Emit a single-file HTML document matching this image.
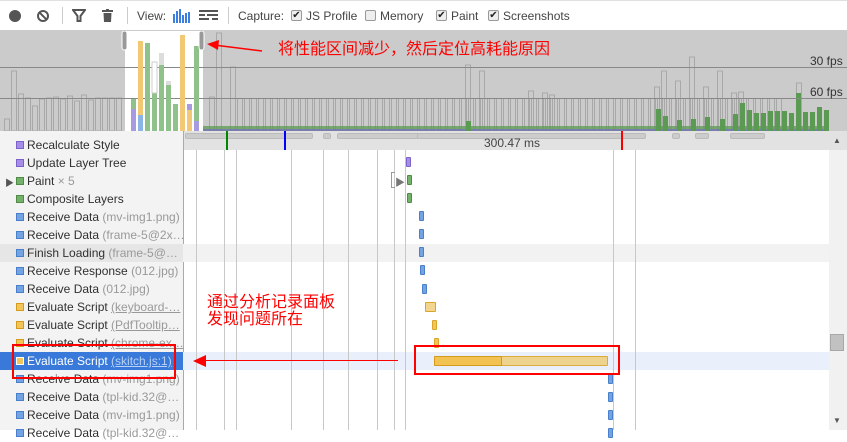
<!DOCTYPE html>
<html><head><meta charset="utf-8"><style>
*{margin:0;padding:0;box-sizing:border-box}
body{width:847px;height:430px;overflow:hidden;background:#fff;font-family:"Liberation Sans","Noto Sans CJK SC",sans-serif;position:relative;font-size:12px;color:#222}
.a{position:absolute}
.tb{left:0;top:0;width:847px;height:31px;background:#fff;border-bottom:1px solid #ccc;border-top:1px solid #e0e0e0}
.tt{font-size:12px;color:#444;top:9px}
.cb{width:11px;height:11px;border:1px solid #999;border-radius:2px;background:#eee;top:10px;font-size:10px;line-height:9px;text-align:center;color:#222}
.row{left:0;width:829px;height:18px}
.lab{position:absolute;left:27px;top:2px;font-size:12px;color:#303030;white-space:nowrap}
.lab i{font-style:normal;color:#999}
.sq{position:absolute;left:16px;top:5px;width:8px;height:8px;border:1px solid}
.gl{top:150px;width:1px;height:280px;background:#c8c8c8}
.b{position:absolute;border:1px solid;border-radius:1px}
</style></head><body>
<div class="a tb"></div>
<div class="a" style="left:9px;top:10px;width:12px;height:12px;border-radius:6px;background:#555"></div>
<div class="a" style="left:37px;top:10px;width:12px;height:12px;border-radius:6px;border:2px solid #555"></div>
<div class="a" style="left:38px;top:15px;width:10px;height:2px;background:#555;transform:rotate(45deg)"></div>
<div class="a" style="left:62px;top:7px;width:1px;height:17px;background:#ccc"></div>
<svg class="a" style="left:72px;top:9px" width="14" height="14"><path d="M1 1H13L8.5 7V12H5.5V7Z" fill="none" stroke="#555" stroke-width="2"/></svg>
<svg class="a" style="left:102px;top:9px" width="12" height="14"><rect x="0" y="1" width="11" height="2" fill="#555"/><rect x="4" y="0" width="3" height="2" fill="#555"/><path d="M1.5 4H9.5L9 13H2Z" fill="#555"/></svg>
<div class="a" style="left:127px;top:7px;width:1px;height:17px;background:#ccc"></div>
<div class="a tt" style="left:137px">View:</div>
<svg class="a" style="left:173px;top:9px" width="17" height="14"><g fill="#3b7de0"><rect x="0" y="5" width="2" height="9"/><rect x="3" y="2" width="2" height="12"/><rect x="6" y="0" width="2" height="14"/><rect x="9" y="6" width="2" height="8"/><rect x="12" y="4" width="2" height="10"/><rect x="15" y="3" width="2" height="11"/></g></svg>
<svg class="a" style="left:199px;top:10px" width="19" height="11"><g fill="#555"><rect x="0" y="0" width="19" height="2"/><rect x="0" y="4" width="6" height="2"/><rect x="8" y="4" width="11" height="2"/><rect x="0" y="8" width="10" height="2"/><rect x="13" y="8" width="6" height="2"/></g></svg>
<div class="a" style="left:228px;top:7px;width:1px;height:17px;background:#ccc"></div>
<div class="a tt" style="left:238px">Capture:</div>
<div class="a cb" style="left:291px">✔</div><div class="a tt" style="left:306px">JS Profile</div>
<div class="a cb" style="left:365px"></div><div class="a tt" style="left:380px">Memory</div>
<div class="a cb" style="left:436px">✔</div><div class="a tt" style="left:451px">Paint</div>
<div class="a cb" style="left:488px">✔</div><div class="a tt" style="left:503px">Screenshots</div>

<svg class="a" style="left:0;top:31px" width="847" height="100">
<rect width="847" height="100" fill="#cbcbcb"/>
<rect x="125" y="0" width="78" height="100" fill="#fff"/>
<g fill="none" stroke="#a8a8a8">
<rect x="4.5" y="88" width="5" height="12"/><rect x="11.5" y="40" width="5" height="60"/><rect x="18.5" y="63" width="5" height="37"/><rect x="25.5" y="67" width="5" height="33"/><rect x="32.5" y="75" width="5" height="25"/><rect x="39.5" y="68" width="5" height="32"/><rect x="46.5" y="67" width="5" height="33"/><rect x="53.5" y="66" width="5" height="34"/><rect x="60.5" y="68" width="5" height="32"/><rect x="67.5" y="65" width="5" height="35"/><rect x="74.5" y="70" width="5" height="30"/><rect x="81.5" y="64" width="5" height="36"/><rect x="88.5" y="69" width="5" height="31"/><rect x="95.5" y="67" width="5" height="33"/><rect x="102.5" y="67" width="5" height="33"/><rect x="109.5" y="67" width="5" height="33"/><rect x="116.5" y="67" width="5" height="33"/>
<rect x="209.5" y="66" width="5" height="34"/><rect x="216.5" y="2" width="5" height="98"/><rect x="230.5" y="36" width="5" height="64"/>
<path d="M237.5 67.5h5v33h-5z m7 0h5v33h-5z m7 0h5v33h-5z m7 0h5v33h-5z m7 0h5v33h-5z m7 0h5v33h-5z m7 0h5v33h-5z m7 0h5v33h-5z m7 0h5v33h-5z m7 0h5v33h-5z m7 0h5v33h-5z m7 0h5v33h-5z m7 0h5v33h-5z m7 0h5v33h-5z m7 0h5v33h-5z m7 0h5v33h-5z m7 0h5v33h-5z m7 0h5v33h-5z m7 0h5v33h-5z m7 0h5v33h-5z m7 0h5v33h-5z m7 0h5v33h-5z m7 0h5v33h-5z m7 0h5v33h-5z m7 0h5v33h-5z m7 0h5v33h-5z m7 0h5v33h-5z m7 0h5v33h-5z m7 0h5v33h-5z m7 0h5v33h-5z m7 0h5v33h-5z m7 0h5v33h-5z m7 0h5v33h-5z m7 0h5v33h-5z m7 0h5v33h-5z m7 0h5v33h-5z m7 0h5v33h-5z m7 0h5v33h-5z m7 0h5v33h-5z m7 0h5v33h-5z m7 0h5v33h-5z m7 0h5v33h-5z m7 0h5v33h-5z m7 0h5v33h-5z m7 0h5v33h-5z m7 0h5v33h-5z m7 0h5v33h-5z m7 0h5v33h-5z m7 0h5v33h-5z m7 0h5v33h-5z m7 0h5v33h-5z m7 0h5v33h-5z m7 0h5v33h-5z m7 0h5v33h-5z m7 0h5v33h-5z m7 0h5v33h-5z m7 0h5v33h-5z m7 0h5v33h-5z m7 0h5v33h-5z m7 0h5v33h-5z m7 0h5v33h-5z m7 0h5v33h-5z m7 0h5v33h-5z m7 0h5v33h-5z m7 0h5v33h-5z m7 0h5v33h-5z m7 0h5v33h-5z m7 0h5v33h-5z m7 0h5v33h-5z m7 0h5v33h-5z m7 0h5v33h-5z m7 0h5v33h-5z m7 0h5v33h-5z m7 0h5v33h-5z m7 0h5v33h-5z m7 0h5v33h-5z m7 0h5v33h-5z m7 0h5v33h-5z"/>
<rect x="465.5" y="34" width="5" height="66"/><rect x="479.5" y="40" width="5" height="60"/><rect x="528.5" y="60" width="5" height="40"/><rect x="542.5" y="62" width="5" height="38"/><rect x="549.5" y="64" width="5" height="36"/><rect x="654.5" y="56" width="5" height="44"/><rect x="661.5" y="40" width="5" height="60"/><rect x="675.5" y="50" width="5" height="50"/><rect x="689.5" y="26" width="5" height="74"/><rect x="703.5" y="56" width="5" height="44"/><rect x="717.5" y="40" width="5" height="60"/><rect x="731.5" y="62" width="5" height="38"/><rect x="738.5" y="61" width="5" height="39"/><rect x="796.5" y="52" width="5" height="48"/>
</g>
<rect x="203" y="95" width="626" height="5" fill="#5b9a52" opacity=".75"/>
<rect x="203" y="98" width="626" height="2" fill="#7b6fc4" opacity=".7"/>
<g fill="#5b9a52">
<rect x="466" y="90" width="5" height="10"/><rect x="656" y="78" width="5" height="22"/><rect x="663" y="85" width="5" height="15"/><rect x="677" y="89" width="5" height="11"/><rect x="691" y="88" width="5" height="12"/><rect x="705" y="86" width="5" height="14"/><rect x="720" y="88" width="5" height="12"/><rect x="733" y="83" width="5" height="17"/><rect x="740" y="72" width="5" height="28"/><rect x="747" y="79" width="5" height="21"/><rect x="754" y="82" width="5" height="18"/><rect x="761" y="82" width="5" height="18"/><rect x="768" y="80" width="5" height="20"/><rect x="775" y="80" width="5" height="20"/><rect x="782" y="80" width="5" height="20"/><rect x="789" y="82" width="5" height="18"/><rect x="796" y="62" width="5" height="38"/><rect x="803" y="81" width="5" height="19"/><rect x="810" y="81" width="5" height="19"/><rect x="817" y="76" width="5" height="24"/><rect x="824" y="79" width="5" height="21"/>
</g>
<line x1="0" y1="36.5" x2="847" y2="36.5" stroke="#888"/>
<line x1="0" y1="67.5" x2="847" y2="67.5" stroke="#888"/>
<text x="810" y="34" font-size="12" fill="#333" font-family="Liberation Sans">30 fps</text>
<text x="810" y="65" font-size="12" fill="#333" font-family="Liberation Sans">60 fps</text>
<g>
<rect x="131" y="68" width="5" height="32" fill="#a89ae0"/><rect x="131" y="68" width="5" height="10" fill="#8fc18a"/>
<rect x="138" y="10" width="5" height="90" fill="#f2c874"/><rect x="138" y="84" width="5" height="16" fill="#8ab4e8"/>
<rect x="145" y="12" width="5" height="88" fill="#8fc18a"/>
<rect x="152" y="62" width="5" height="38" fill="#8fc18a"/><rect x="152" y="31" width="5" height="31" fill="#fff" stroke="#ccc"/>
<rect x="159" y="34" width="5" height="66" fill="#8fc18a"/><rect x="159" y="22" width="5" height="12" fill="#ddd"/>
<rect x="166" y="54" width="5" height="46" fill="#8fc18a"/><rect x="166" y="50" width="5" height="4" fill="#ddd"/>
<rect x="173" y="73" width="5" height="27" fill="#8fc18a"/>
<rect x="180" y="4" width="5" height="96" fill="#f2c874"/>
<rect x="187" y="79" width="5" height="21" fill="#f2c874"/><rect x="187" y="73" width="5" height="6" fill="#a89ae0"/>
<rect x="194" y="15" width="5" height="85" fill="#8fc18a"/><rect x="194" y="90" width="5" height="10" fill="#a89ae0"/>
</g>
<rect x="122" y="0" width="5" height="19" rx="2.5" fill="#999" stroke="#fff"/>
<rect x="199" y="0" width="5" height="19" rx="2.5" fill="#999" stroke="#fff"/>
<line x1="214" y1="14" x2="262" y2="20" stroke="red" stroke-width="1.5"/>
<path d="M207 13L219 9L218 19Z" fill="red"/>
<text x="278" y="23" font-size="16" fill="red" font-family="Noto Sans CJK SC,sans-serif">将性能区间减少，然后定位高耗能原因</text>
</svg>

<div class="a" style="left:0;top:131px;width:183px;height:299px;background:#f3f3f3"></div>
<div class="a" style="left:183px;top:131px;width:646px;height:19px;background:#e2e2e2"></div>
<div class="a" style="left:185px;top:133px;width:128px;height:6px;background:#ccc;border-radius:2px;border:1px solid #bbb"></div>
<div class="a" style="left:323px;top:133px;width:8px;height:6px;background:#ccc;border-radius:2px;border:1px solid #bbb"></div>
<div class="a" style="left:337px;top:133px;width:228px;height:6px;background:#ccc;border-radius:2px;border:1px solid #bbb"></div>
<div class="a" style="left:417px;top:133px;width:229px;height:6px;background:#ccc;border-radius:2px;border:1px solid #bbb"></div>
<div class="a" style="left:672px;top:133px;width:8px;height:6px;background:#ccc;border-radius:2px;border:1px solid #bbb"></div>
<div class="a" style="left:695px;top:133px;width:14px;height:6px;background:#ccc;border-radius:2px;border:1px solid #bbb"></div>
<div class="a" style="left:730px;top:133px;width:35px;height:6px;background:#ccc;border-radius:2px;border:1px solid #bbb"></div>
<div class="a" style="left:484px;top:136px;font-size:12px;color:#444">300.47 ms</div>
<div class="a" style="left:226px;top:131px;width:2px;height:19px;background:#080"></div>
<div class="a" style="left:284px;top:131px;width:2px;height:19px;background:#00f"></div>
<div class="a" style="left:621px;top:131px;width:2px;height:19px;background:#f00"></div>
<div class="a" style="left:183px;top:131px;width:1px;height:299px;background:#aaa"></div>

<div class="a row" style="top:244px;background:#f2f2f2"></div>
<div class="a" style="left:0;top:244px;width:183px;height:18px;background:#e6e6e6"></div>
<div class="a row" style="top:352px;background:#e9f0fb"></div>
<div class="a" style="left:0;top:352px;width:183px;height:18px;background:#3879d9"></div>

<div class="a gl" style="left:196px"></div><div class="a gl" style="left:224px"></div><div class="a gl" style="left:236px"></div><div class="a gl" style="left:291px"></div><div class="a gl" style="left:323px"></div><div class="a gl" style="left:348px"></div><div class="a gl" style="left:377px"></div><div class="a gl" style="left:394px"></div><div class="a gl" style="left:405px"></div><div class="a gl" style="left:613px"></div><div class="a gl" style="left:635px"></div>

<div class="a row" style="top:136px"><span class="sq" style="background:#a58de8;border-color:#7b62c9"></span><span class="lab">Recalculate Style</span></div>
<div class="a row" style="top:154px"><span class="sq" style="background:#a58de8;border-color:#7b62c9"></span><span class="lab">Update Layer Tree</span></div>
<div class="a row" style="top:172px"><span class="a" style="left:5px;top:4px;font-size:9px;color:#555">▶</span><span class="sq" style="background:#74b16a;border-color:#4f8b45"></span><span class="lab">Paint <i>× 5</i></span></div>
<div class="a row" style="top:190px"><span class="sq" style="background:#74b16a;border-color:#4f8b45"></span><span class="lab">Composite Layers</span></div>
<div class="a row" style="top:208px"><span class="sq" style="background:#74a3e4;border-color:#4a7fc9"></span><span class="lab">Receive Data <i>(mv-img1.png)</i></span></div>
<div class="a row" style="top:226px"><span class="sq" style="background:#74a3e4;border-color:#4a7fc9"></span><span class="lab">Receive Data <i>(frame-5@2x…</i></span></div>
<div class="a row" style="top:244px"><span class="sq" style="background:#74a3e4;border-color:#4a7fc9"></span><span class="lab">Finish Loading <i>(frame-5@…</i></span></div>
<div class="a row" style="top:262px"><span class="sq" style="background:#74a3e4;border-color:#4a7fc9"></span><span class="lab">Receive Response <i>(012.jpg)</i></span></div>
<div class="a row" style="top:280px"><span class="sq" style="background:#74a3e4;border-color:#4a7fc9"></span><span class="lab">Receive Data <i>(012.jpg)</i></span></div>
<div class="a row" style="top:298px"><span class="sq" style="background:#f3c45a;border-color:#d49a1a"></span><span class="lab">Evaluate Script <i style="text-decoration:underline">(keyboard-…</i></span></div>
<div class="a row" style="top:316px"><span class="sq" style="background:#f3c45a;border-color:#d49a1a"></span><span class="lab">Evaluate Script <i style="text-decoration:underline">(PdfTooltip…</i></span></div>
<div class="a row" style="top:334px"><span class="sq" style="background:#f3c45a;border-color:#d49a1a"></span><span class="lab">Evaluate Script <i style="text-decoration:underline">(chrome-ex…</i></span></div>
<div class="a row" style="top:352px;width:183px"><span class="sq" style="background:#f3c45a;border-color:#fff"></span><span class="lab" style="color:#fff">Evaluate Script <i style="color:#b9d2f5;text-decoration:underline">(skitch.js:1)</i></span></div>
<div class="a row" style="top:370px"><span class="sq" style="background:#74a3e4;border-color:#4a7fc9"></span><span class="lab">Receive Data <i>(mv-img1.png)</i></span></div>
<div class="a row" style="top:388px"><span class="sq" style="background:#74a3e4;border-color:#4a7fc9"></span><span class="lab">Receive Data <i>(tpl-kid.32@…</i></span></div>
<div class="a row" style="top:406px"><span class="sq" style="background:#74a3e4;border-color:#4a7fc9"></span><span class="lab">Receive Data <i>(mv-img1.png)</i></span></div>
<div class="a row" style="top:424px"><span class="sq" style="background:#74a3e4;border-color:#4a7fc9"></span><span class="lab">Receive Data <i>(tpl-kid.32@…</i></span></div>

<div class="b" style="left:406px;top:157px;width:5px;height:10px;background:#a58de8;border-color:#7b62c9"></div>
<div class="b" style="left:391px;top:172px;width:4px;height:16px;border-color:#999;border-right:none;border-radius:0"></div>
<div class="a" style="left:395px;top:174px;font-size:10px;color:#777">▶</div>
<div class="b" style="left:407px;top:175px;width:5px;height:10px;background:#74b16a;border-color:#4f8b45"></div>
<div class="b" style="left:407px;top:193px;width:5px;height:10px;background:#74b16a;border-color:#4f8b45"></div>
<div class="b" style="left:419px;top:211px;width:5px;height:10px;background:#74a3e4;border-color:#4a7fc9"></div>
<div class="b" style="left:419px;top:229px;width:5px;height:10px;background:#74a3e4;border-color:#4a7fc9"></div>
<div class="b" style="left:419px;top:247px;width:5px;height:10px;background:#74a3e4;border-color:#4a7fc9"></div>
<div class="b" style="left:420px;top:265px;width:5px;height:10px;background:#74a3e4;border-color:#4a7fc9"></div>
<div class="b" style="left:422px;top:284px;width:5px;height:10px;background:#74a3e4;border-color:#4a7fc9"></div>
<div class="b" style="left:425px;top:302px;width:11px;height:10px;background:#f2d690;border-color:#d9a62a"></div>
<div class="b" style="left:432px;top:320px;width:5px;height:10px;background:#f3c45a;border-color:#d9a62a"></div>
<div class="b" style="left:434px;top:338px;width:5px;height:10px;background:#f3c45a;border-color:#d9a62a"></div>
<div class="b" style="left:434px;top:356px;width:174px;height:10px;background:#eed38f;border-color:#dcab3c"></div>
<div class="b" style="left:434px;top:356px;width:68px;height:10px;background:#f2c253;border-color:#d49a1a"></div>
<div class="b" style="left:608px;top:374px;width:5px;height:10px;background:#74a3e4;border-color:#4a7fc9"></div>
<div class="b" style="left:608px;top:392px;width:5px;height:10px;background:#74a3e4;border-color:#4a7fc9"></div>
<div class="b" style="left:608px;top:410px;width:5px;height:10px;background:#74a3e4;border-color:#4a7fc9"></div>
<div class="b" style="left:608px;top:428px;width:5px;height:10px;background:#74a3e4;border-color:#4a7fc9"></div>

<div class="a" style="left:12px;top:344px;width:164px;height:35px;border:2px solid red"></div>
<div class="a" style="left:414px;top:345px;width:206px;height:30px;border:2px solid red"></div>
<div class="a" style="left:200px;top:360px;width:198px;height:1px;background:red"></div>
<svg class="a" style="left:193px;top:355px" width="14" height="12"><path d="M0 6L13 0V12Z" fill="red"/></svg>
<div class="a" style="left:207px;top:292px;font-size:16px;line-height:17px;color:red;font-family:'Noto Sans CJK SC',sans-serif">通过分析记录面板<br>发现问题所在</div>

<div class="a" style="left:829px;top:150px;width:18px;height:280px;background:#f1f1f1"></div>
<div class="a" style="left:829px;top:131px;width:18px;height:19px;background:#e2e2e2"></div>
<div class="a" style="left:833px;top:136px;font-size:8px;color:#555">▲</div>
<div class="a" style="left:830px;top:334px;width:14px;height:17px;background:#c1c1c1;border:1px solid #a8a8a8"></div>
<div class="a" style="left:833px;top:416px;font-size:8px;color:#555">▼</div>
</body></html>
